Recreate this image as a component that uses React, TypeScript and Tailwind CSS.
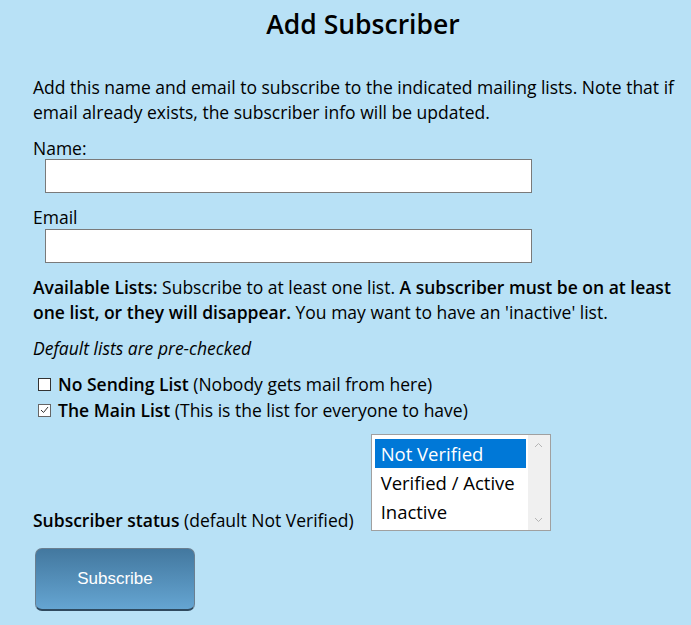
export default function App() {
  return (
    <main className="min-h-screen w-full bg-[#b8e1f6] font-['Open_Sans',sans-serif] text-[17.5px] text-black">
      <div className="pl-[33px] pr-[10px] pt-[7px]">
        <h1 className="pl-[12px] text-center text-[26.5px] font-semibold leading-[34px]">Add Subscriber</h1>

        <p className="mt-[34px] leading-[25px]">
          Add this name and email to subscribe to the indicated mailing lists. Note that if email already exists, the subscriber info will be updated.
        </p>

        <div className="mt-[12px]">
          <label className="block leading-[22px]">Name:</label>
          <input className="ml-[12px] block h-[34px] w-[487px] border border-[#7a7a7a] bg-white" />
        </div>

        <div className="mt-[13px]">
          <label className="block leading-[22px]">Email</label>
          <input className="ml-[12px] mt-[1px] block h-[34px] w-[487px] border border-[#7a7a7a] bg-white" />
        </div>

        <p className="mt-[12px] leading-[25px]">
          <b className="font-semibold">Available Lists:</b> Subscribe to at least one list. <b className="font-semibold">A subscriber must be on at least one list, or they will disappear.</b> You may want to have an 'inactive' list.
        </p>

        <p className="mt-[11px] italic leading-[25px]">Default lists are pre-checked</p>

        <div className="mt-[10px] flex flex-col">
          <label className="flex items-center gap-[7px] pl-[5px] leading-[26px]">
            <span className="block h-[13px] w-[13px] border border-[#333] bg-white" />
            <span><b className="font-semibold">No Sending List</b> (Nobody gets mail from here)</span>
          </label>
          <label className="flex items-center gap-[7px] pl-[5px] leading-[26px]">
            <span className="flex h-[13px] w-[13px] items-center justify-center border border-[#666] bg-white">
              <svg width="9" height="8" viewBox="0 0 9 8"><path d="M1 4 L3.5 6.5 L8 1" fill="none" stroke="#333" strokeWidth="1" /></svg>
            </span>
            <span><b className="font-semibold">The Main List</b> (This is the list for everyone to have)</span>
          </label>
        </div>

        <div className="mt-[11px] flex items-end gap-[17px]">
          <p className="leading-[22px]"><b className="font-semibold">Subscriber status</b> (default Not Verified)</p>
          <div className="flex h-[97px] w-[180px] border border-[#a0a0a0] bg-white">
            <ul className="flex-1 pl-[3px] pr-[2px] pt-[4px] text-[18.5px] leading-[29px]">
              <li className="bg-[#0078d7] pl-[6px] text-white">Not Verified</li>
              <li className="pl-[6px]">Verified / Active</li>
              <li className="pl-[6px]">Inactive</li>
            </ul>
            <div className="flex w-[22px] flex-col items-center justify-between bg-[#f0f0f0] py-[7px] text-[#b5b5b5]">
              <svg width="9" height="6" viewBox="0 0 9 6"><path d="M1 5 L4.5 1.5 L8 5" fill="none" stroke="currentColor" strokeWidth="1" /></svg>
              <svg width="9" height="6" viewBox="0 0 9 6"><path d="M1 1 L4.5 4.5 L8 1" fill="none" stroke="currentColor" strokeWidth="1" /></svg>
            </div>
          </div>
        </div>

        <button className="ml-[2px] mt-[17px] h-[63px] w-[160px] rounded-[7px] border border-[#6a7f90] border-b-[2px] border-b-[#2f4a5f] bg-gradient-to-b from-[#43789f] to-[#65a5d2] font-['Liberation_Sans',sans-serif] text-[17px] text-white">
          Subscribe
        </button>
      </div>
    </main>
  );
}
